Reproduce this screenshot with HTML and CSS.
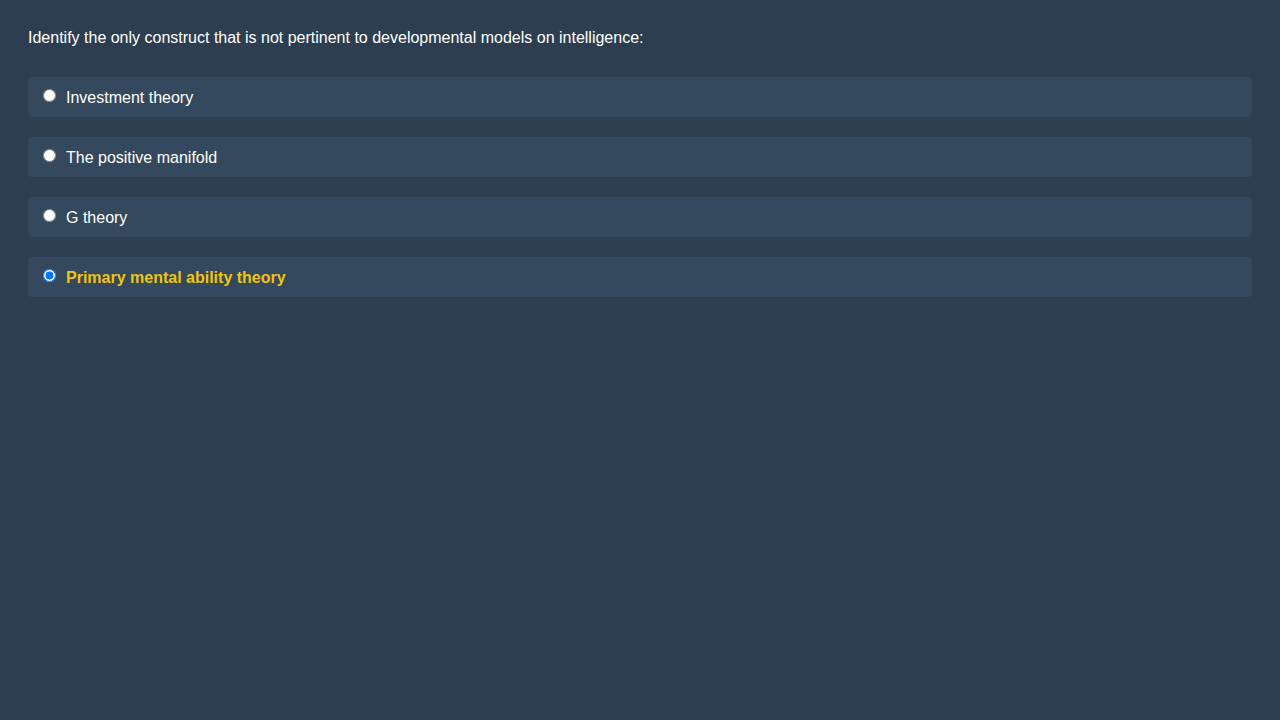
FILE: index.html
```html
<!DOCTYPE html>
<html>
<head>
<meta charset="utf-8">
<link rel="stylesheet" href="styles.css">
</head>
<body>
<div class="quiz">
  <p class="question">Identify the only construct that is not pertinent to developmental models on intelligence:</p>
  <div class="options">
    <label class="option"><input type="radio" name="q"><span>Investment theory</span></label>
    <label class="option"><input type="radio" name="q"><span>The positive manifold</span></label>
    <label class="option"><input type="radio" name="q"><span>G theory</span></label>
    <label class="option selected"><input type="radio" name="q" checked><span>Primary mental ability theory</span></label>
  </div>
</div>
</body>
</html>
```
FILE: styles.css
```css
html, body {
  margin: 0;
  padding: 0;
  background: #2c3e50;
  height: 100%;
}
body {
  font-family: "Liberation Sans", Arial, sans-serif;
  color: #ffffff;
}
.quiz {
  padding: 29px 28px 28px;
}
.question {
  margin: 0;
  font-size: 16px;
  line-height: 18px;
}
.options {
  margin-top: 30px;
  display: flex;
  flex-direction: column;
  gap: 20px;
}
.option {
  display: flex;
  align-items: center;
  height: 40px;
  padding: 0 15px;
  background: #34495e;
  border-radius: 4px;
  font-size: 16px;
  box-sizing: border-box;
}
.option input {
  margin: 0 10px 0 0;
  width: 13px;
  height: 13px;
  position: relative;
  top: -2px;
}
.option span {
  position: relative;
  top: 1px;
}
.option.selected span {
  color: #f1c40f;
  font-weight: bold;
}
```
